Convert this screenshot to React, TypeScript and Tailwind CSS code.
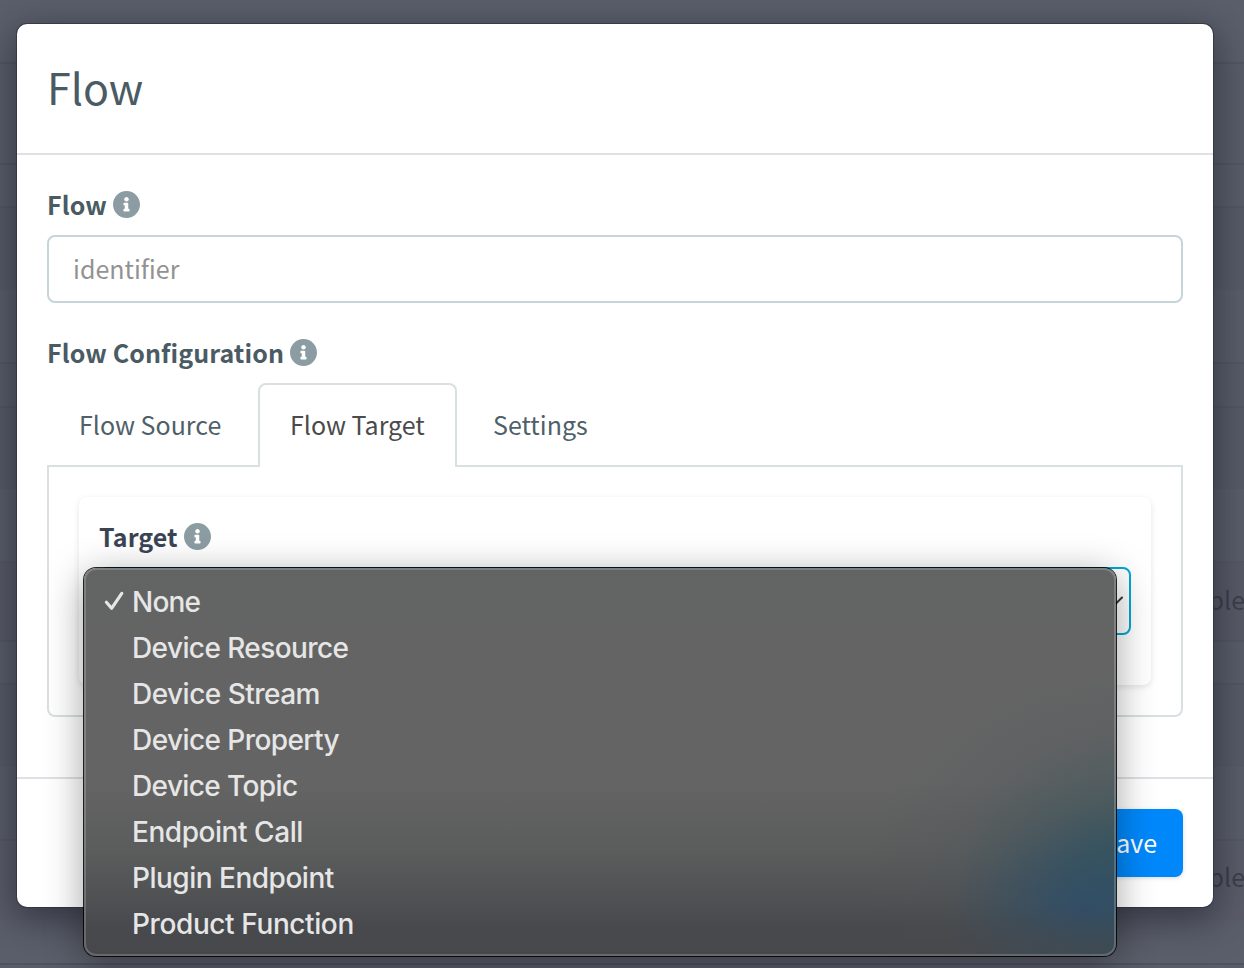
import React from "react";

const SANS = "font-['Noto_Sans_CJK_SC',sans-serif]";

const options = [
  { label: "None", tracking: "tracking-[-0.8px]" },
  { label: "Device Resource", tracking: "tracking-[-0.6px]" },
  { label: "Device Stream", tracking: "tracking-[-0.53px]" },
  { label: "Device Property", tracking: "tracking-[-0.58px]" },
  { label: "Device Topic", tracking: "tracking-[-0.62px]" },
  { label: "Endpoint Call", tracking: "tracking-[-0.45px]" },
  { label: "Plugin Endpoint", tracking: "tracking-[-0.5px]" },
  { label: "Product Function", tracking: "tracking-[-0.4px]" },
];

function InfoIcon() {
  return (
    <svg viewBox="8 8 496 496" className="size-[27px] shrink-0 fill-[#8c9ca3]" aria-hidden="true">
      <path d="M256 8C119.043 8 8 119.083 8 256c0 136.997 111.043 248 248 248s248-111.003 248-248C504 119.083 392.957 8 256 8zm0 110c23.196 0 42 18.804 42 42s-18.804 42-42 42-42-18.804-42-42 18.804-42 42-42zm56 254c0 6.627-5.373 12-12 12h-88c-6.627 0-12-5.373-12-12v-24c0-6.627 5.373-12 12-12h12v-64h-12c-6.627 0-12-5.373-12-12v-24c0-6.627 5.373-12 12-12h64c6.627 0 12 5.373 12 12v100h12c6.627 0 12 5.373 12 12v24z" />
    </svg>
  );
}

function Label({ text, dark }: { text: string; dark?: boolean }) {
  return (
    <div className="flex h-[30px] items-center gap-[6px]">
      <span
        className={
          dark
            ? "whitespace-nowrap text-[25px] leading-[30px] font-bold tracking-[0.05px] text-[#3b4455]"
            : "whitespace-nowrap text-[25px] leading-[30px] font-bold tracking-[0.1px] text-[#4a5b63]"
        }
      >
        {text}
      </span>
      <InfoIcon />
    </div>
  );
}

function Backdrop() {
  return (
    <div className="flex h-full flex-col bg-[#5b5f6b] text-[25px] text-[#3c404c]">
      <div className="h-[64px] shrink-0 border-b-2 border-[#535763]" />
      <div className="h-[101px] shrink-0 border-b-2 border-[#535763] bg-[#595d69]" />
      <div className="h-[43px] shrink-0 border-b-2 border-[#535763] bg-[#595d69]" />
      <div className="h-[82px] shrink-0 bg-[#575b67]" />
      <div className="h-[74px] shrink-0 border-b-2 border-[#535763] bg-[#5a5e6a]" />
      <div className="h-[44px] shrink-0 border-b-2 border-[#535763] bg-[#585c68]" />
      <div className="h-[81px] shrink-0 bg-[#575b67]" />
      <div className="h-[74px] shrink-0 border-b-2 border-[#555965] bg-[#5a5e6a]" />
      <div className="flex h-[79px] shrink-0 items-center justify-end border-b-2 border-[#535763] bg-[#585b67] pb-[4px]">
        <span className="-mr-px">ple</span>
      </div>
      <div className="h-[43px] shrink-0 border-b-2 border-[#535763] bg-[#595d69]" />
      <div className="h-[82px] shrink-0 bg-[#575b67]" />
      <div className="h-[74px] shrink-0 border-b-2 border-[#555965] bg-[#5a5e6a]" />
      <div className="flex h-[79px] shrink-0 items-center justify-end bg-[#5a5d69] pb-[7px]">
        <span className="-mr-px">ple</span>
      </div>
      <div className="h-[45px] shrink-0 border-b-2 border-[#4f535f]" />
      <div className="grow bg-[#595d69]" />
    </div>
  );
}

function OptionsMenu() {
  return (
    <ul className="absolute top-[568px] left-[84px] h-[388px] w-[1032px] overflow-hidden rounded-[12px] bg-[linear-gradient(180deg,rgba(68,70,74,0)_86%,rgba(68,70,74,0.5)_97%),radial-gradient(ellipse_140px_100px_at_97%_88%,rgba(48,76,106,0.75)_0%,rgba(50,76,104,0.4)_40%,rgba(52,76,104,0.12)_75%,rgba(52,76,104,0)_100%),radial-gradient(ellipse_270px_225px_at_102%_82%,rgba(46,84,94,0.95)_0%,rgba(48,84,94,0.8)_20%,rgba(58,84,92,0.5)_42%,rgba(74,86,92,0.2)_68%,rgba(84,90,94,0)_100%),linear-gradient(180deg,#626463_0%,#646464_25%,#646464_55%,#5b5c5c_73%,#4a4b4e_92%,#494a4d_100%)] pt-[11px] font-[Inter,sans-serif] text-[28px] text-[#e6e6e6] shadow-[inset_0_0_0_2px_rgba(255,255,255,0.18)]">
      {options.map(({ label, tracking }, i) => (
        <li key={label} className="flex h-[46px] items-center pl-[19px] whitespace-nowrap">
          <span className="flex w-[29px] shrink-0">
            {i === 0 && (
              <svg viewBox="0 0 22 22" className="-mt-[2px] size-[22px] shrink-0" fill="none" aria-hidden="true">
                <path d="M3.4 12.2 L8.6 18.3 L18.8 3.4" stroke="currentColor" strokeWidth="3.2" strokeLinecap="round" strokeLinejoin="round" />
              </svg>
            )}
          </span>
          <span className={`font-[450] ${tracking}`}>{label}</span>
        </li>
      ))}
    </ul>
  );
}

export default function App() {
  return (
    <div className={`relative h-[968px] w-[1244px] overflow-hidden ${SANS}`}>
      <Backdrop />

      <section className="absolute top-[24px] left-[17px] flex h-[883px] w-[1196px] flex-col rounded-[10px] bg-white shadow-[0_0_0_1px_rgba(45,47,58,0.65),0_10px_36px_4px_rgba(20,22,34,0.5)]">
        <header className="flex h-[131px] shrink-0 items-center border-b-2 border-[#e0e1e2] pb-[5px] pl-[30px]">
          <h1 className="text-[43px] leading-[52px] text-[#4a5b63]">Flow</h1>
        </header>

        <div className="flex h-[624px] shrink-0 flex-col border-b-2 border-[#dfdfe5] px-[30px] pt-[34px]">
          <Label text="Flow" />
          <input
            placeholder="identifier"
            className="mt-[16px] h-[68px] w-full shrink-0 rounded-[8px] border-2 border-[#c5d5d9] bg-white px-[24px] pb-[2px] text-[25px] text-[#4a5b63] placeholder:text-[#929292] placeholder:opacity-100"
          />
          <div className="mt-[34px]">
            <Label text="Flow Configuration" />
          </div>

          <nav className="mt-[16px] flex h-[84px] shrink-0 text-[25px] leading-[30px] text-[#4f6068]">
            <div className="mr-[4px] flex w-[207px] items-center pb-[2px] pl-[32px]">Flow Source</div>
            <div className="relative z-10 mr-[4px] flex w-[199px] items-center rounded-t-[8px] border-2 border-b-0 border-[#d8e0e2] bg-white pb-[4px] pl-[30px] text-[#4b4b4b]">
              Flow Target
            </div>
            <div className="flex items-center pb-[2px] pl-[32px]">Settings</div>
          </nav>

          <div className="-mt-[2px] h-[252px] shrink-0 rounded-b-[8px] border-2 border-[#d8e0e2] p-[30px]">
            <div className="h-[188px] rounded-[8px] bg-white px-[20px] pt-[24px] shadow-[0_2px_6px_rgba(0,0,0,0.11)]">
              <Label text="Target" dark />
              <div className="mt-[16px] flex h-[68px] items-center justify-end rounded-[8px] border-2 border-[#00a9d4] pr-[6px]">
                <svg viewBox="0 0 16 16" className="size-[16px]" fill="none" aria-hidden="true">
                  <path d="M1 4.5 L8 11.5 L15 4.5" stroke="#343a40" strokeWidth="2" strokeLinecap="round" strokeLinejoin="round" />
                </svg>
              </div>
            </div>
          </div>
        </div>

        <footer className="flex grow items-center justify-end pr-[30px]">
          <button className="h-[68px] rounded-[8px] bg-[#0088fb] px-[26px] text-[25px] text-white shadow-[0_1px_4px_rgba(0,0,0,0.15)]">
            Save
          </button>
        </footer>
      </section>

      <div className="absolute top-[568px] left-[84px] h-[388px] w-[1032px] rounded-[12px] shadow-[0_0_0_1px_rgba(0,0,0,0.85),0_8px_38px_rgba(0,0,0,0.38)]" />
      <OptionsMenu />
    </div>
  );
}
